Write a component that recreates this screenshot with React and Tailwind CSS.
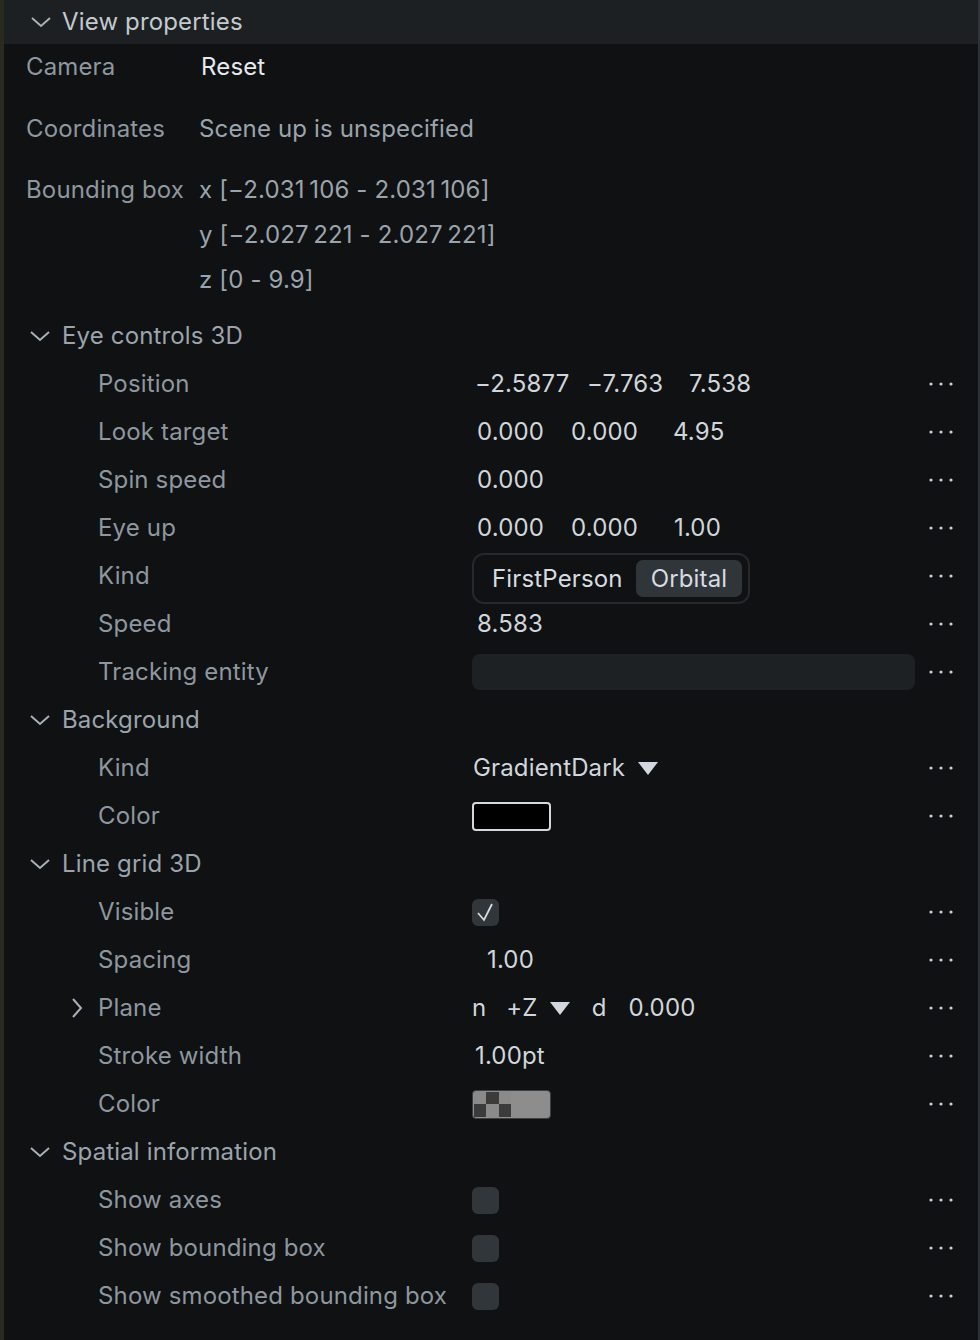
import React from "react";

const Dots = () => (
  <div className="ml-auto mr-[24px] flex h-full w-[26px] items-center">
    <svg width="26" height="6" viewBox="0 0 26 6">
      <circle cx="3" cy="3" r="1.6" fill="#c9d1d8" />
      <circle cx="13" cy="3" r="1.6" fill="#c9d1d8" />
      <circle cx="23" cy="3" r="1.6" fill="#c9d1d8" />
    </svg>
  </div>
);

const ChevronDown = () => (
  <svg width="22" height="14" viewBox="0 0 22 14" className="shrink-0">
    <path d="M2 3 L11 11 L20 3" fill="none" stroke="#a8b1b9" strokeWidth="2" />
  </svg>
);

const ChevronRight = () => (
  <svg width="12" height="20" viewBox="0 0 12 20" className="shrink-0">
    <path d="M2 1 L10 10 L2 19" fill="none" stroke="#a8b1b9" strokeWidth="2" />
  </svg>
);

const Tri = () => (
  <svg width="20" height="13" viewBox="0 0 20 13" className="shrink-0">
    <path d="M0 0 L20 0 L10 13 Z" fill="#d2d8dd" />
  </svg>
);

const Section = ({ title }) => (
  <div className="flex h-[48px] items-center pl-[25px]">
    <ChevronDown />
    <span className="ml-[11px] text-[#9ba4ac]">{title}</span>
  </div>
);

const Row = ({ label, children, chevron }) => (
  <div className="flex h-[48px] items-center">
    <div className="flex w-[468px] shrink-0 items-center pl-[94px]">
      {chevron ? (
        <div className="-ml-[27px] mr-[15px] flex items-center">
          <ChevronRight />
        </div>
      ) : null}
      <span className="whitespace-nowrap text-[#8e979f]">{label}</span>
    </div>
    <div className="flex flex-1 items-center text-[#d0d6db]">{children}</div>
    <Dots />
  </div>
);

const Checkbox = ({ checked }) => (
  <div className="flex h-[27px] w-[27px] items-center justify-center rounded-[6px] bg-[#31363b]">
    {checked ? (
      <svg width="27" height="27" viewBox="0 0 27 27">
        <path d="M6 14 L12 21 L20 5" fill="none" stroke="#d6dbdf" strokeWidth="1.8" />
      </svg>
    ) : null}
  </div>
);

export default function App() {
  return (
    <div className="flex h-[1340px] w-[980px] overflow-hidden bg-[#0f1113] font-['Inter'] text-[24px] leading-none tracking-[0.15px]">
      <div className="w-[4px] shrink-0 bg-[#2a2a1f]" />
      <div className="flex min-w-0 flex-1 flex-col">
        <div className="flex h-[44px] shrink-0 items-center bg-[#1d2022] pl-[26px]">
          <ChevronDown />
          <span className="ml-[10px] text-[#c2cad1]">View properties</span>
        </div>

        <div className="flex h-[46px] items-center pl-[22px]">
          <span className="w-[175px] text-[#8e979f]">Camera</span>
          <span className="text-[#e6e9ec]">Reset</span>
        </div>
        <div className="mt-[16px] flex h-[46px] items-center pl-[22px]">
          <span className="w-[173px] text-[#8e979f]">Coordinates</span>
          <span className="text-[#9ba4ac]">Scene up is unspecified</span>
        </div>
        <div className="mt-[15px] flex pl-[22px]">
          <span className="flex h-[45px] w-[173px] items-center text-[#8e979f]">Bounding box</span>
          <div className="flex flex-col text-[#9ba4ac]">
            <span className="flex h-[45px] items-center">x [−2.031{"\u2009"}106 - 2.031{"\u2009"}106]</span>
            <span className="flex h-[45px] items-center">y [−2.027{"\u2009"}221 - 2.027{"\u2009"}221]</span>
            <span className="flex h-[45px] items-center">z [0 - 9.9]</span>
          </div>
        </div>

        <div className="mt-[10px]">
          <Section title="Eye controls 3D" />
          <Row label="Position">
            <span className="ml-[3px] w-[112px]">−2.5877</span>
            <span className="w-[102px]">−7.763</span>
            <span>7.538</span>
          </Row>
          <Row label="Look target">
            <span className="ml-[5px] w-[94px]">0.000</span>
            <span className="w-[102px]">0.000</span>
            <span>4.95</span>
          </Row>
          <Row label="Spin speed">
            <span className="ml-[5px]">0.000</span>
          </Row>
          <Row label="Eye up">
            <span className="ml-[5px] w-[94px]">0.000</span>
            <span className="w-[103px]">0.000</span>
            <span>1.00</span>
          </Row>
          <Row label="Kind">
            <div className="mt-[5px] flex h-[51px] w-[278px] items-center rounded-[12px] border-2 border-[#25292c] pl-[18px] pr-[6px]">
              <span className="text-[#d7dce0]">FirstPerson</span>
              <span className="ml-auto flex h-[37px] w-[106px] items-center justify-center rounded-[7px] bg-[#30353a] text-[#d7dce0]">
                Orbital
              </span>
            </div>
          </Row>
          <Row label="Speed">
            <span className="ml-[5px]">8.583</span>
          </Row>
          <Row label="Tracking entity">
            <div className="h-[36px] w-[443px] rounded-[8px] bg-[#1e2124]" />
          </Row>

          <Section title="Background" />
          <Row label="Kind">
            <span className="ml-[1px]">GradientDark</span>
            <span className="ml-[13px]">
              <Tri />
            </span>
          </Row>
          <Row label="Color">
            <div className="h-[29px] w-[79px] rounded-[4px] border-2 border-[#d5d9dd] bg-black" />
          </Row>

          <Section title="Line grid 3D" />
          <Row label="Visible">
            <Checkbox checked />
          </Row>
          <Row label="Spacing">
            <span className="ml-[15px]">1.00</span>
          </Row>
          <Row label="Plane" chevron>
            <span>n</span>
            <span className="ml-[20px]">+Z</span>
            <span className="ml-[12px]">
              <Tri />
            </span>
            <span className="ml-[22px]">d</span>
            <span className="ml-[22px]">0.000</span>
          </Row>
          <Row label="Stroke width">
            <span className="ml-[3px]">1.00pt</span>
          </Row>
          <Row label="Color">
            <div className="flex h-[29px] w-[79px] overflow-hidden rounded-[4px] border border-[#3a3f44] bg-[#8d8d8d] p-[1px]">
              <div className="grid h-full w-[37px] grid-cols-3 grid-rows-2">
                <div className="bg-[#8a8a8a]" />
                <div className="bg-[#3b3b3b]" />
                <div className="bg-[#8a8a8a]" />
                <div className="bg-[#3b3b3b]" />
                <div className="bg-[#8a8a8a]" />
                <div className="bg-[#3b3b3b]" />
              </div>
            </div>
          </Row>

          <Section title="Spatial information" />
          <Row label="Show axes">
            <Checkbox />
          </Row>
          <Row label="Show bounding box">
            <Checkbox />
          </Row>
          <Row label="Show smoothed bounding box">
            <Checkbox />
          </Row>
        </div>
      </div>
      <div className="w-[2px] shrink-0 bg-[#2f3337]" />
    </div>
  );
}
